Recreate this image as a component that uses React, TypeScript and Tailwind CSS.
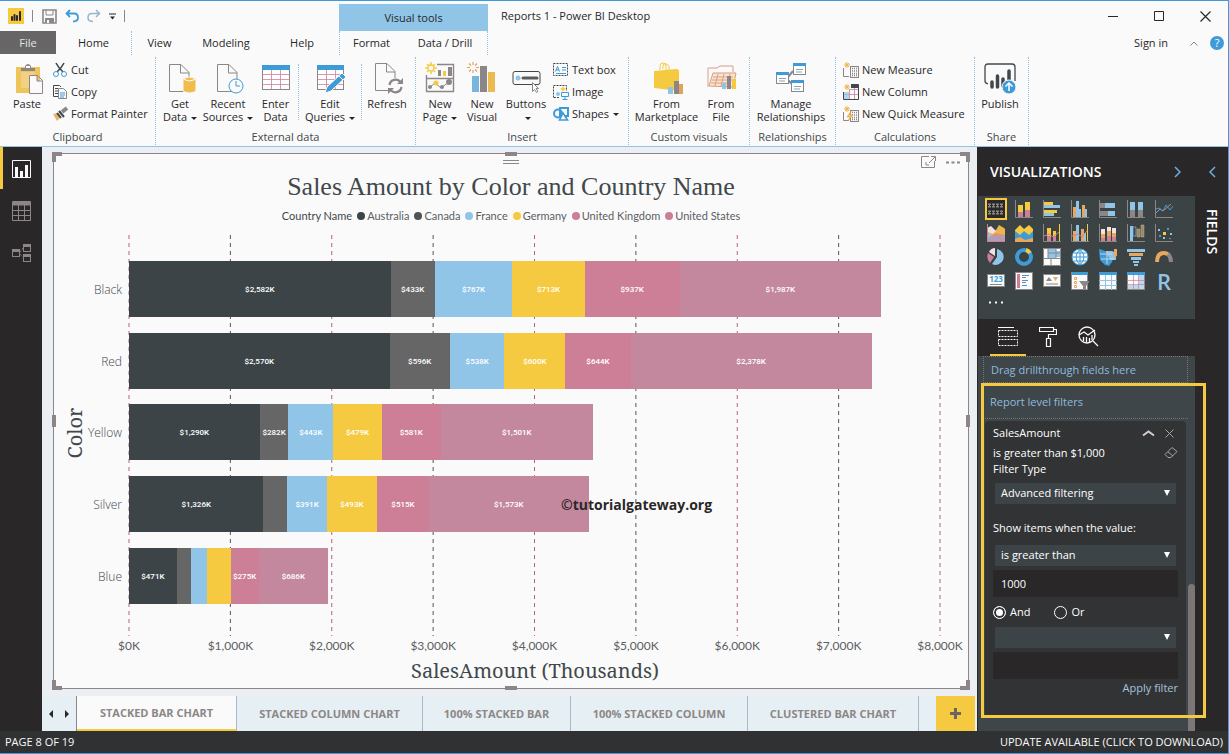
import React, { useState } from "react";

type Kids = { children?: React.ReactNode };

const GREY = "#8c8786";
const BLUE = "#3f9bd8";
const SKY = "#90c5e8";
const YEL = "#f5ca41";
const PINK = "#ce7f98";
const INK = "#41484b";
const DARK = "#292728";

function Ic({ w = 32, h = 32, children }: Kids & { w?: number; h?: number }) {
  return (
    <svg width={w} height={h} viewBox={`0 0 ${w} ${h}`} fill="none" aria-hidden="true" className="block shrink-0">
      {children}
    </svg>
  );
}

/* ---------- ribbon pieces ---------- */

function Caret() {
  return <span className="ml-1 inline-block border-x-[3px] border-t-[3px] border-x-transparent border-t-[#292728] align-middle" />;
}

function BigButton({ icon, lines, width, caret }: { icon: React.ReactNode; lines: string[]; width: string; caret?: boolean }) {
  return (
    <button type="button" className={`flex flex-col items-center gap-[3px] text-[11px] leading-[13px] whitespace-nowrap ${width}`}>
      {icon}
      <span className="block text-center">
        {lines.map((line, i) => (
          <span key={i} className="block">
            {line}
            {caret && i === lines.length - 1 && <Caret />}
          </span>
        ))}
      </span>
    </button>
  );
}

function SmallButton({ icon, label, caret }: { icon: React.ReactNode; label: string; caret?: boolean }) {
  return (
    <button type="button" className="flex h-[22px] items-center gap-[3px] text-[11px] whitespace-nowrap">
      {icon}
      <span>
        {label}
        {caret && <Caret />}
      </span>
    </button>
  );
}

function Group({ label, width, children }: Kids & { label: string; width: string }) {
  return (
    <section className={`flex shrink-0 flex-col justify-between border-r border-dotted border-[#90c5e8] ${width}`}>
      <div className="flex">{children}</div>
      <h2 className="text-center text-[11px] leading-4 text-[#41484b]">{label}</h2>
    </section>
  );
}

function Divider() {
  return <span className="mx-[3px] mt-[2px] h-14 border-l border-dotted border-[#90c5e8]" />;
}

const page = (
  <path d="M5.500 2.500H17l8 8V29.500H5.500zM16.500 2.500V11H25" stroke={GREY} fill="#fafafa" />
);

const Paste = () => (
  <Ic>
    <rect x="5" y="5" width="24" height="26" fill="#efc45a" />
    <rect x="10" y="10" width="14" height="16" fill="#fafafa" opacity=".25" />
    <path d="M10 9V6h4V4q3-4 6 0v2h4v3z" fill={GREY} />
    <rect x="15" y="4" width="4" height="2" fill="#fafafa" />
    <path d="M18.500 13.500h8l5 5v13h-13zM26 13.500V19h5.500" stroke={GREY} fill="#fafafa" />
  </Ic>
);
const GetData = () => (
  <Ic>
    {page}
    <path d="M19 17q6-4 13 0v12q-6 4-13 0z" fill="#efbd4c" stroke="#fafafa" />
    <path d="M20 17.500q5.500 3 11 0" stroke="#fff" />
  </Ic>
);
const Recent = () => (
  <Ic>
    {page}
    <circle cx="24" cy="24" r="7" fill="#fafafa" stroke={BLUE} />
    <path d="M24 19v5h4" stroke={BLUE} />
  </Ic>
);
const EnterData = () => (
  <Ic>
    <rect x="2.500" y="3.500" width="27" height="24" stroke={GREY} fill="#fff" />
    <rect x="2" y="3" width="28" height="5" fill={BLUE} />
    <path d="M11.500 8v19M20.500 8v19M3 12.500h26M3 17.500h26M3 22.500h26" stroke={PINK} opacity=".8" />
  </Ic>
);
const EditQ = () => (
  <Ic>
    <rect x="3.500" y="3.500" width="26" height="24" stroke={GREY} fill="#fff" />
    <rect x="3" y="3" width="27" height="5" fill={BLUE} />
    <path d="M12.500 8v19M21.500 8v19M4 12.500h25M4 17.500h25M4 22.500h25" stroke={PINK} opacity=".8" />
    <path d="M11 31l2-6L28 11l4 4-15 14z" fill={BLUE} stroke="#fafafa" />
    <path d="M25 14l4 4" stroke="#fafafa" />
  </Ic>
);
const Refresh = () => (
  <Ic>
    <path d="M4.500 1.500H16l8 8V28.500H4.500zM15.500 1.500V10H24" stroke={GREY} fill="#fafafa" />
    <rect x="17" y="16" width="15" height="15" fill="#fafafa" />
    <path d="M18.500 23a6 6 0 0 1 11-2.500M30.500 25a6 6 0 0 1-11 2.500" stroke={GREY} strokeWidth="2.200" />
    <path d="M32 16v6h-6zM17 32v-6h6z" fill={GREY} />
  </Ic>
);
const Sun = ({ x, y, c = YEL }: { x: number; y: number; c?: string }) => (
  <g transform={`translate(${x} ${y})`}>
    <path d="M0-6V-3M0 3v3M-6 0h3M3 0h3M-4-4l2 2M4-4L2-2M-4 4l2-2M4 4L2 2" stroke={c} strokeWidth="1.500" />
    <circle r="3" fill="#fafafa" stroke={c} strokeWidth="1.300" />
  </g>
);
const NewPage = () => (
  <Ic>
    <path d="M13 2.500h16.500v27h-27V13M3 16.500h26" stroke={GREY} strokeWidth="1.400" />
    <path d="M14 8h3v6h-3zM24 5h4v9h-4z" fill={GREY} />
    <path d="M19 9h3v5h-3z" fill={YEL} />
    <path d="M5 26l6-5 6 5 8-6" stroke={GREY} />
    <circle cx="6" cy="25" r="2" fill={GREY} />
    <circle cx="12" cy="21" r="2.500" fill={YEL} />
    <circle cx="18" cy="25" r="2" fill={GREY} />
    <circle cx="25" cy="20" r="3" fill={GREY} />
    <Sun x={7} y={6} />
  </Ic>
);
const NewVisual = () => (
  <Ic>
    <rect x="6" y="14" width="7" height="16" fill="#7ab5de" />
    <rect x="14" y="4" width="7" height="26" fill={GREY} />
    <rect x="22" y="10" width="7" height="20" fill="#e9bb50" />
    <path d="M7 0v3M7 8v3M1 5.500h3M10 5.500h3M3 1.500l2 2M11 1.500l-2 2M3 9.500l2-2M11 9.500l-2-2" stroke="#e2a25c" strokeWidth="1.200" />
  </Ic>
);
const ButtonsIcon = () => (
  <Ic>
    <rect x="3" y="9.500" width="27" height="13" rx="2" stroke={INK} />
    <circle cx="8" cy="16" r="2.500" fill={SKY} />
    <path d="M13 16h14" stroke="#5b5c5e" strokeWidth="3" strokeLinecap="round" />
    <path d="M22.500 20.500v9l2-2 2 3 1.500-1-2-3h2.500z" fill="#fff" stroke={GREY} />
  </Ic>
);
const Market = () => (
  <Ic>
    <path d="M9 8V4q0-3 3-3t3 3v4M12 7V3q2-3 6 1v4" stroke={YEL} />
    <path d="M3 9l22-2q3 0 3 2v20L3 26z" fill={YEL} />
    <path d="M17 25h5v7h-5z" fill={SKY} />
    <path d="M23 19h5v13h-5z" fill={GREY} />
    <path d="M28 22h4v10h-4z" fill="#e4a258" />
  </Ic>
);
const FromFile = () => (
  <Ic>
    <path d="M3 25V6h9l3-2h13v6" stroke="#d99c90" />
    <path d="M4 24l4-13h23l-3 14z" fill="#f6e4d8" stroke="#de9c70" />
    <path d="M8 15h20M7 18h20M6 21h20M13 12l-3 12M19 12l-3 12M25 12l-3 12" stroke="#e0a078" />
    <path d="M17 21h4v6h-4z" fill={SKY} />
    <path d="M22 14h4v13h-4z" fill={GREY} />
    <path d="M27 17h4v10h-4z" fill={YEL} />
  </Ic>
);
const Manage = () => (
  <Ic>
    <path d="M13 15l5-6M13 18l4 4" stroke={GREY} strokeWidth="2" />
    {[[1, 10], [18, 1], [16, 18]].map(([x, y]) => (
      <g key={x} transform={`translate(${x} ${y})`}>
        <rect x=".5" y=".5" width="12" height="11" fill="#fff" stroke={GREY} />
        <rect width="13" height="3" fill={BLUE} />
        <path d="M3 6.500h7M3 9h6" stroke="#87a4bf" />
      </g>
    ))}
  </Ic>
);
const Publish = () => (
  <Ic>
    <path d="M4 22q-3-1-3-3V5q0-3 3-3h24q3 0 3 3v14" stroke={INK} strokeWidth="1.300" />
    <path d="M8 20v5M13.500 14v11M19 17v7M25 9v9" stroke={INK} strokeWidth="3.500" strokeLinecap="round" />
    <circle cx="25" cy="25" r="7" fill={BLUE} stroke="#fafafa" />
    <path d="M25 29v-8M21.500 24.500L25 21l3.500 3.500" stroke="#fff" strokeWidth="1.500" />
  </Ic>
);
const Cut = () => (
  <Ic w={16} h={16}>
    <path d="M4 1q2 4 7 9M12 1q-2 4-7 9" stroke={INK} strokeWidth="1.600" />
    <circle cx="4" cy="12" r="2.500" stroke={BLUE} />
    <circle cx="12" cy="12" r="2.500" stroke={BLUE} />
  </Ic>
);
const Copy = () => (
  <Ic w={16} h={16}>
    <path d="M6 12.500H1.500v-11h6L9 3M3 4.500h3M3 7h3M3 9.500h3" stroke={INK} />
    <path d="M6.500 4.500h5l3 3v7h-8z" stroke={GREY} fill="#fafafa" />
    <path d="M8 9h5M8 11h5M8 13h4" stroke={BLUE} />
  </Ic>
);
const Brush = () => (
  <Ic w={16} h={16}>
    <path d="M1 8l6-1 2 4-4 4z" fill="#e8b36a" />
    <path d="M7 5l5 6M5 7l4 5" stroke={INK} strokeWidth="2" />
    <path d="M10 6l5-4" stroke={GREY} strokeWidth="4" />
  </Ic>
);
const TextBox = () => (
  <Ic w={16} h={16}>
    <rect x=".5" y="1.500" width="14" height="12" stroke={INK} strokeDasharray="2 1" />
    <path d="M2.500 9.500l2-5 2 5M3 8h3" stroke={BLUE} />
    <path d="M9 5.500h4M9 8h4M3 11.500h10" stroke={BLUE} />
  </Ic>
);
const ImageIcon = () => (
  <Ic w={16} h={16}>
    <path d="M.5 13.500V1.500h13V7M1 13.500h5" stroke={INK} strokeDasharray="2 1" />
    <path d="M10 2l1 2 2 1-2 1-1 2-1-2-2-1 2-1z" fill={YEL} />
    <circle cx="5" cy="10" r="2" fill={SKY} />
    <path d="M8.500 8.500h7v4h-7zM12 13v2M9.500 15.500h5" stroke={BLUE} />
  </Ic>
);
const Shapes = () => (
  <Ic w={16} h={16}>
    <circle cx="5" cy="7.500" r="4" stroke={BLUE} strokeWidth="2" />
    <path d="M7 2h8v8H7z" stroke={BLUE} strokeWidth="2" />
    <path d="M6.500 14l3.500-7 4.500 7z" fill="#fafafa" stroke={BLUE} strokeWidth="1.600" />
  </Ic>
);
function Calc({ kind }: { kind: "measure" | "column" | "quick" }) {
  return (
    <Ic w={16} h={16}>
      {kind === "column" ? (
        <>
          <path d="M8 .5h7.500v15H.5V8M15.500 1v14" stroke={INK} />
          <path d="M6.500 6v9M1 10.500h14M11.500 3v12M6 5.500h9" stroke={PINK} opacity=".8" />
          <path d="M8 1h7v3H8z" fill={INK} />
          <path d="M1 8h5v7H1z" fill={SKY} opacity=".7" />
        </>
      ) : (
        <>
          <path d="M.5 6v8.500H6" stroke={GREY} />
          <rect x="7.500" y="4.500" width="8" height="11" stroke={GREY} fill="#fafafa" />
          <path d="M9 6.500h5M9 9h5M9 11.500h5M9 13.500h5" stroke={GREY} strokeDasharray="1 1" strokeWidth="1.500" />
        </>
      )}
      {kind === "quick" && <path d="M8 5l-4 6h3l-2 4 5-6H7z" fill={YEL} stroke="#e08c50" strokeWidth=".5" />}
      <path d="M4 0v6M1 3h6M2 1l4 4M6 1L2 5" stroke="#efb544" />
    </Ic>
  );
}

/* ---------- header ---------- */

const tabs: [string, string][] = [
  ["Home", "w-[76px] border-r border-dotted border-[#90c5e8]"],
  ["View", "w-[55px]"],
  ["Modeling", "w-[78px]"],
  ["Help", "w-[74px]"],
  ["Format", "w-16 border-l border-dotted border-[#90c5e8]"],
  ["Data / Drill", "w-[85px] border-r border-dotted border-[#90c5e8]"],
];

function Header() {
  return (
    <header className="bg-[#fafafa] text-[#292728]">
      <div className="flex h-[30px] items-stretch">
        <div className="flex w-[339px] items-center gap-2 pl-2">
          <Ic w={16} h={16}>
            <path d="M0 0h16v16H0z" fill={YEL} />
            <path d="M4 9v3M6.500 7v5M9 8v4M12 4v8" stroke={DARK} strokeWidth="2" strokeLinecap="round" />
          </Ic>
          <Ic w={2} h={12}><path d="M.5 0v12" stroke={GREY} /></Ic>
          <button type="button" aria-label="Save">
            <Ic w={15} h={15}>
              <path d="M1 1h13v13H1z" stroke={GREY} strokeWidth="1.600" />
              <path d="M4 1v5h7V1" stroke={GREY} />
              <path d="M3 9h9v5H3z" fill={GREY} />
              <path d="M5 11h2v3H5z" fill="#fafafa" />
            </Ic>
          </button>
          <button type="button" aria-label="Undo">
            <Ic w={14} h={14}>
              <path d="M5 1L1.500 4.500 5 8M2 4.500h7q4 0 4 4t-5 4" stroke={BLUE} strokeWidth="1.800" />
            </Ic>
          </button>
          <button type="button" aria-label="Redo">
            <Ic w={14} h={14}>
              <path d="M9 1l3.500 3.500L9 8M12 4.500H5q-4 0-4 4t5 4" stroke="#97b6cf" strokeWidth="1.500" />
            </Ic>
          </button>
          <button type="button" aria-label="Customize quick access">
            <Ic w={7} h={7}><path d="M0 1h7" stroke={DARK} /><path d="M1 3.500h5L3.500 6.500z" fill={DARK} /></Ic>
          </button>
          <Ic w={2} h={12}><path d="M.5 0v12" stroke={GREY} /></Ic>
        </div>
        <div className="mt-[3px] w-[149px] bg-[#90c5e8] text-center text-[11px] leading-7">Visual tools</div>
        <h1 className="ml-[13px] text-[11px] leading-[30px]">Reports 1 - Power BI Desktop</h1>
        <div className="ml-auto flex items-center gap-[36px] pr-[17px]">
          <button type="button" aria-label="Minimize"><Ic w={10} h={11}><path d="M0 5.500h10" stroke={DARK} /></Ic></button>
          <button type="button" aria-label="Maximize"><Ic w={10} h={11}><path d="M.5.500h9v9h-9z" stroke={DARK} /></Ic></button>
          <button type="button" aria-label="Close"><Ic w={11} h={11}><path d="M.5.500l10 10M10.500.500l-10 10" stroke={DARK} strokeWidth="1.200" /></Ic></button>
        </div>
      </div>
      <nav className="flex h-6 items-start text-[11px] leading-6">
        <button type="button" className="h-[23px] w-14 bg-[#676566] leading-[23px] text-[#e4e4e4]">File</button>
        {tabs.map(([name, cls]) => (
          <button key={name} type="button" className={cls}>{name}</button>
        ))}
        <div className="ml-auto flex h-6 items-center gap-[22px] pr-1">
          <button type="button">Sign in</button>
          <div className="flex items-center gap-3">
            <button type="button" aria-label="Collapse ribbon"><Ic w={8} h={5}><path d="M.5 4.500L4 1l3.500 3.500" stroke={GREY} /></Ic></button>
            <button type="button" aria-label="Help" className="h-[14px] w-[14px] rounded-full bg-[#3f9bd8] text-center text-[11px] leading-[14px] text-white">?</button>
          </div>
        </div>
      </nav>
      <div className="flex h-[92px] border-b border-[#90c5e8] pt-[2px] pb-px">
        <Group label="Clipboard" width="w-[156px]">
          <div className="ml-1 pt-[5px]"><BigButton icon={<Paste />} lines={["Paste"]} width="w-[46px]" /></div>
          <div className="ml-[2px] pt-[2px]">
            <SmallButton icon={<Cut />} label="Cut" />
            <SmallButton icon={<Copy />} label="Copy" />
            <SmallButton icon={<Brush />} label="Format Painter" />
          </div>
        </Group>
        <Group label="External data" width="w-[260px]">
          <div className="ml-1 flex pt-[5px]">
            <BigButton icon={<GetData />} lines={["Get", "Data"]} width="w-10" caret />
            <BigButton icon={<Recent />} lines={["Recent", "Sources"]} width="w-14" caret />
            <BigButton icon={<EnterData />} lines={["Enter", "Data"]} width="w-[39px]" />
            <Divider />
            <BigButton icon={<EditQ />} lines={["Edit", "Queries"]} width="w-14" caret />
            <Divider />
            <BigButton icon={<Refresh />} lines={["Refresh"]} width="w-11" />
          </div>
        </Group>
        <Group label="Insert" width="w-[213px]">
          <div className="ml-[3px] flex pt-[5px]">
            <BigButton icon={<NewPage />} lines={["New", "Page"]} width="w-[42px]" caret />
            <BigButton icon={<NewVisual />} lines={["New", "Visual"]} width="w-[42px]" />
            <BigButton icon={<ButtonsIcon />} lines={["Buttons", ""]} width="w-[46px]" caret />
          </div>
          <div className="ml-1 pt-[2px]">
            <SmallButton icon={<TextBox />} label="Text box" />
            <SmallButton icon={<ImageIcon />} label="Image" />
            <SmallButton icon={<Shapes />} label="Shapes" caret />
          </div>
        </Group>
        <Group label="Custom visuals" width="w-[121px]">
          <div className="ml-1 flex pt-[5px]">
            <BigButton icon={<Market />} lines={["From", "Marketplace"]} width="w-[67px]" />
            <BigButton icon={<FromFile />} lines={["From", "File"]} width="w-[42px]" />
          </div>
        </Group>
        <Group label="Relationships" width="w-[86px]">
          <div className="pt-[5px]"><BigButton icon={<Manage />} lines={["Manage", "Relationships"]} width="w-[82px]" /></div>
        </Group>
        <Group label="Calculations" width="w-[139px]">
          <div className="ml-[7px] pt-[2px]">
            <SmallButton icon={<Calc kind="measure" />} label="New Measure" />
            <SmallButton icon={<Calc kind="column" />} label="New Column" />
            <SmallButton icon={<Calc kind="quick" />} label="New Quick Measure" />
          </div>
        </Group>
        <Group label="Share" width="w-[54px]">
          <div className="pt-[5px]"><BigButton icon={<Publish />} lines={["Publish"]} width="w-[50px]" /></div>
        </Group>
      </div>
    </header>
  );
}

/* ---------- chart ---------- */

const series = [
  { name: "Australia", color: "#3d4447", dot: "#3d4447" },
  { name: "Canada", color: "#666667", dot: "#4f5355" },
  { name: "France", color: SKY, dot: SKY },
  { name: "Germany", color: YEL, dot: YEL },
  { name: "United Kingdom", color: PINK, dot: PINK },
  { name: "United States", color: "#c4889e", dot: "#ca7f98" },
];

const rows: { name: string; values: number[]; hidden?: number[] }[] = [
  { name: "Black", values: [2582, 433, 767, 713, 937, 1987] },
  { name: "Red", values: [2570, 596, 538, 600, 644, 2378] },
  { name: "Yellow", values: [1290, 282, 443, 479, 581, 1501] },
  { name: "Silver", values: [1326, 235, 391, 493, 515, 1573], hidden: [1] },
  { name: "Blue", values: [471, 145, 152, 235, 275, 686], hidden: [1, 2, 3] },
];

const money = (v: number) => `$${v.toLocaleString("en-US")}K`;
const X0 = 129;
const UNIT = 811 / 8000;

function Plot() {
  const ticks = [0, 1, 2, 3, 4, 5, 6, 7, 8];
  return (
    <svg viewBox="54 230 914 458" className="block w-full" role="img" aria-label="Sales amount by color and country">
      {ticks.map((t) => (
        <g key={t}>
          <line x1={X0 + t * 1000 * UNIT} x2={X0 + t * 1000 * UNIT} y1="235" y2="636" stroke={t % 2 ? "#5f5157" : "#b9617f"} strokeDasharray="4 4" strokeWidth="1" />
          <text x={X0 + t * 1000 * UNIT} y="650" textAnchor="middle" fontSize="12" fill="#5a6063" className="font-['Lato']">
            {t === 0 ? "$0K" : money(t * 1000)}
          </text>
        </g>
      ))}
      {rows.map((row, r) => {
        const y = Math.round(261 + r * 71.7);
        let x = X0;
        return (
          <g key={row.name}>
            <text x="122" y={y + 33} textAnchor="end" fontSize="12" fill={INK} className="font-['Open_Sans'] font-light">{row.name}</text>
            {row.values.map((v, i) => {
              const left = x;
              const w = v * UNIT;
              x += w;
              return (
                <g key={i}>
                  <rect x={left} y={y} width={w} height="56" fill={series[i].color} shapeRendering="crispEdges" />
                  {!row.hidden?.includes(i) && (
                    <text x={left + w / 2} y={y + 31} textAnchor="middle" fontSize="8" fill="#fff" className="font-['Roboto'] font-medium">{money(v)}</text>
                  )}
                </g>
              );
            })}
          </g>
        );
      })}
      <text x="535" y="678" textAnchor="middle" fontSize="20" fill={INK} className="font-['Noto_Serif','Liberation_Serif',serif]">SalesAmount (Thousands)</text>
      <text transform="translate(82 433) rotate(-90)" textAnchor="middle" fontSize="20" fill={INK} className="font-['Noto_Serif','Liberation_Serif',serif]">Color</text>
      <text x="561" y="510" fontSize="14" fill={DARK} className="font-['Open_Sans'] font-bold">©tutorialgateway.org</text>
    </svg>
  );
}

function ChartVisual() {
  const corner = "absolute h-[10px] w-[10px] border-[#8c8786]";
  const mid = "absolute bg-[#8c8786]";
  return (
    <section className="relative mx-2 mt-[6px] mb-[7px] ml-[11px] border border-[#8c8786] bg-[#fafafa]">
      <span className={`${corner} -top-[2px] -left-[2px] border-t-4 border-l-4`} />
      <span className={`${corner} -top-[2px] -right-[2px] border-t-4 border-r-4`} />
      <span className={`${corner} -bottom-[2px] -left-[2px] border-b-4 border-l-4`} />
      <span className={`${corner} -right-[2px] -bottom-[2px] border-r-4 border-b-4`} />
      <span className={`${mid} -top-[2px] left-1/2 h-1 w-3 -translate-x-1/2`} />
      <span className={`${mid} -bottom-[2px] left-1/2 h-1 w-3 -translate-x-1/2`} />
      <span className={`${mid} top-1/2 -left-[2px] h-3 w-1 -translate-y-1/2`} />
      <span className={`${mid} top-1/2 -right-[2px] h-3 w-1 -translate-y-1/2`} />
      <span className="absolute top-[6px] left-1/2 h-1 w-4 -translate-x-1/2 border-y border-[#8c8786]" />
      <div className="absolute top-[2px] right-2 flex items-center gap-[10px]">
        <button type="button" aria-label="Focus mode">
          <Ic w={15} h={12}>
            <path d="M8 .5H.5v11h13V5M8 7l6-6M10 .5h4.500V5M5 6v3h3" stroke={GREY} />
          </Ic>
        </button>
        <button type="button" aria-label="More options">
          <Ic w={14} h={12}><path d="M0 6.500h3M5.500 6.500h3M11 6.500h3" stroke={GREY} strokeWidth="2" /></Ic>
        </button>
      </div>
      <h2 className="mt-[17px] text-center font-['Liberation_Serif',serif] text-[26px] leading-8 text-[#41484b]">Sales Amount by Color and Country Name</h2>
      <ul className="mt-[5px] mb-[6px] flex items-center justify-center gap-[5px] font-['Lato'] text-[11px] leading-4 text-[#5a6063]">
        <li className="text-[#41484b]">Country Name</li>
        {series.map((s) => (
          <li key={s.name} className="flex items-center gap-[2px]">
            <svg width="8" height="8" aria-hidden="true"><circle cx="4" cy="4" r="4" fill={s.dot} /></svg>
            {s.name}
          </li>
        ))}
      </ul>
      <Plot />
    </section>
  );
}

const pages: [string, string][] = [
  ["STACKED BAR CHART", "w-[160px]"],
  ["STACKED COLUMN CHART", "w-[186px]"],
  ["100% STACKED BAR", "w-[148px]"],
  ["100% STACKED COLUMN", "w-[177px]"],
  ["CLUSTERED BAR CHART", "w-[171px]"],
];

function PageTabs() {
  const [current, setCurrent] = useState(0);
  return (
    <nav className="mt-auto flex h-[35px] bg-[#e6eff4] text-[11px] font-bold text-[#8c8786]">
      <div className="flex w-[35px] items-center justify-center gap-3 border-r border-[#8c8786]">
        <button type="button" aria-label="Previous pages"><Ic w={4} h={8}><path d="M4 0v8L0 4z" fill={DARK} /></Ic></button>
        <button type="button" aria-label="Next pages"><Ic w={4} h={8}><path d="M0 0v8l4-4z" fill={DARK} /></Ic></button>
      </div>
      {pages.map(([name, width], i) => (
        <button
          key={name}
          type="button"
          onClick={() => setCurrent(i)}
          className={`border-r border-[#a9b9cb] pt-[2px] whitespace-nowrap ${width} ${i === current ? "border-b-2 border-b-[#f5ca41] bg-[#fafafa]" : ""}`}
        >
          {name}
        </button>
      ))}
      <button type="button" aria-label="New page" className="mr-[2px] ml-auto flex w-[39px] items-center justify-center bg-[#f5ca41]">
        <Ic w={11} h={11}><path d="M5.500 0v11M0 5.500h11" stroke="#6b6760" strokeWidth="3" /></Ic>
      </button>
    </nav>
  );
}

/* ---------- side panels ---------- */

function LeftNav() {
  return (
    <nav className="flex w-[42px] shrink-0 flex-col bg-[#292728]">
      <button type="button" aria-label="Report view" className="flex h-[42px] items-center border-l-[3px] border-[#f5ca41] pt-[2px] pl-[9px]">
        <Ic w={19} h={18}>
          <path d="M.5.500h18v17H.5z" stroke="#fafafa" />
          <path d="M3 7h3v11H3zM8 11h3v7H8zM13 5h3v13h-3z" fill="#fafafa" />
        </Ic>
      </button>
      <button type="button" aria-label="Data view" className="flex h-[42px] items-center border-l-[3px] border-transparent pt-[2px] pl-[9px]">
        <Ic w={19} h={20}>
          <path d="M.5.500h18v19H.5zM6.500 4v16M12.500 4v16M0 9.500h19M0 14.500h19" stroke={GREY} />
          <path d="M1 1h17v3.500H1z" fill={GREY} />
        </Ic>
      </button>
      <button type="button" aria-label="Model view" className="flex h-[42px] items-center border-l-[3px] border-transparent pt-[2px] pl-[9px]">
        <Ic w={19} h={18}>
          <path d="M8 8l3-4M8 10l3 3" stroke={GREY} strokeDasharray="1 1" />
          {[[0, 5], [11, 0], [11, 10]].map(([x, y]) => (
            <g key={`${x}-${y}`} transform={`translate(${x} ${y})`}>
              <rect x=".5" y=".5" width="7" height="7" stroke={GREY} />
              <rect width="8" height="3" fill={GREY} />
            </g>
          ))}
        </Ic>
      </button>
    </nav>
  );
}

const axis = <path d="M.5 0v17.500H18" stroke={GREY} />;
const OR = "#e7a75c";

const visuals: [string, React.ReactNode][] = [
  ["Custom visual", <><rect width="18" height="18" fill={DARK} /><path d="M1 5.500h16M1 12.500h16" stroke={GREY} strokeDasharray="3 1" strokeWidth="4" /><path d="M1 5.500h16M1 12.500h16" stroke={DARK} strokeDasharray="1 1" /></>],
  ["Stacked column", <>{axis}<path d="M3 5h5v7H3zM10 2h5v9h-5z" fill={YEL} /><path d="M3 12h5v5H3zM10 10h5v7h-5z" fill={PINK} /></>],
  ["Clustered bar", <>{axis}<path d="M1 2h9v3H1zM1 10h13v3H1z" fill={YEL} /><path d="M1 5h16v3H1zM1 13h10v3H1z" fill={SKY} /></>],
  ["Clustered column", <>{axis}<path d="M2 7h3v10H2zM11 5h3v12h-3z" fill={OR} /><path d="M5 1h3v16H5zM8 9h2v8H8zM14 9h2v8h-2z" fill={SKY} /></>],
  ["100% bar", <>{axis}<path d="M1 3h5v5H1zM1 11h8v5H1z" fill={GREY} /><path d="M6 3h10v5H6zM9 11h7v5H9z" fill={SKY} /></>],
  ["100% column", <>{axis}<path d="M3 2h5v8H3zM11 2h5v8h-5z" fill={SKY} /><path d="M3 10h5v7H3zM11 10h5v7h-5z" fill={GREY} /></>],
  ["Line", <>{axis}<path d="M1 13l4-4 3 2 8-7" stroke={PINK} /><path d="M1 9l3-1 4 3 3-6 4 5 3-4" stroke={BLUE} /></>],
  ["Area", <><path d="M0 9l9-3 3-5 5 3 1 1v13H0z" fill="#ecb44c" /><path d="M0 9l6 3 6 0 6-1v7H0z" fill={SKY} /><path d="M0 4l4-2 5 5-3 3-6-2z" fill="#f3dfe2" /><path d="M8 9l10 2v7H0v-3z" fill={PINK} opacity=".6" /><path d="M.5 0v17.500H18" stroke={PINK} /></>],
  ["Stacked area", <><path d="M0 6l5-5 4 4 5-4 4 4v13H0z" fill={YEL} /><path d="M0 7l5 4 4-4 5 4 4-4v11H0z" fill={BLUE} /><path d="M0 15l5-2 5 3 8-2v4H0z" fill={OR} /></>],
  ["Line and stacked column", <>{axis}<path d="M4 4h4v9H4zM10 7h3v6h-3z" fill={YEL} /><path d="M4 12h4v5H4zM10 12h3v5h-3z" fill={PINK} /><path d="M16.500 0v17" stroke={YEL} /><path d="M1 12l5-2 4 3 6-5" stroke={PINK} /></>],
  ["Line and clustered column", <>{axis}<path d="M2 7h3v10H2zM10 5h3v12h-3z" fill={OR} /><path d="M5 1h3v16H5zM13 9h2v8h-2z" fill={SKY} /><path d="M16.500 0v17" stroke={YEL} /><path d="M1 12l6-2 4 3 5-6" stroke={PINK} /></>],
  ["Ribbon", <>{axis}<path d="M2 5h4v5H2zM8 3h4v4H8zM13 4h4v5h-4z" fill="#f3e3dc" /><path d="M2 10h4v4H2zM8 7h4v5H8zM13 9h4v4h-4z" fill={OR} /><path d="M2 14h4v3H2zM8 12h4v5H8zM13 13h4v4h-4z" fill={PINK} /></>],
  ["Waterfall", <>{axis}<path d="M3 2h3v15H3z" fill={SKY} /><path d="M6 3h3v9H6z" fill={INK} stroke={SKY} strokeWidth=".6" /><path d="M10 5h3v8h-3zM14 1h3v12h-3z" fill={GREY} stroke={YEL} strokeWidth=".4" /></>],
  ["Scatter", <>{axis}<path d="M3 5h2v2H3zM8 13h2v2H8zM15 9h2v2h-2z" fill={SKY} /><path d="M8 8h3v3H8z" fill={YEL} /><path d="M12 4h2v2h-2zM4 11h2v2H4z" fill={BLUE} /><path d="M14 14h2v1h-2z" fill={GREY} /></>],
  ["Pie", <><path d="M10 1a8 8 0 1 1-5 15L10 9z" fill={SKY} /><path d="M8 0v8L2 4q2-4 6-4z" fill="#f3dfe2" /><path d="M1 5l6 4-4 6q-4-4-2-10z" fill={PINK} /></>],
  ["Donut", <><circle cx="9" cy="9" r="7" stroke={BLUE} strokeWidth="4" /><path d="M11 2a7 7 0 0 1 4 3" stroke={YEL} strokeWidth="4" /></>],
  ["Treemap", <><path d="M0 0h18v18H0z" fill="#fafafa" /><path d="M5 1h8v9H5zM13 3h4v6h-4z" fill={SKY} /><path d="M.5.500h17v17H.5zM5 0v10M13 0v10M0 10.500h18M8 11v7M5 5h12" stroke={GREY} /></>],
  ["Map", <><circle cx="9" cy="9" r="8" fill="#fafafa" stroke={BLUE} /><path d="M1 9h16M3 5h12M3 13h12M9 1v16M9 1q-8 8 0 16M9 1q8 8 0 16" stroke={BLUE} /></>],
  ["Filled map", <><path d="M0 1l6 2h7l1 7-1 4-3 4-4-1-5-5z" fill={BLUE} /><path d="M7 3h6l4 2v7h-6z" fill={SKY} /><path d="M15 1h3v7l-3 1z" fill={OR} /><path d="M1 6h12M2 11h13M8 3v13" stroke="#c9d2dc" /></>],
  ["Funnel", <><path d="M0 1h18v3H0zM6 13h6v2H6z" fill={SKY} /><path d="M2 5h14v3H2z" fill={OR} /><path d="M4 9h10v3H4zM7 16h4v2H7z" fill={SKY} /></>],
  ["Gauge", <><path d="M2 14q0-9 7-9 3 0 4 2" stroke={OR} strokeWidth="4" /><path d="M13 6q3 3 3 8" stroke={GREY} strokeWidth="4" /></>],
  ["Card", <><rect x=".5" y="2.500" width="17" height="12" fill="#fafafa" stroke={GREY} /><text x="9" y="10" textAnchor="middle" fontSize="8" fill={BLUE} className="font-['Open_Sans'] font-bold">123</text><path d="M3 12.500h12" stroke={GREY} /></>],
  ["Multi-row card", <><rect x=".5" y=".5" width="17" height="17" fill="#fafafa" stroke={GREY} /><path d="M2 2h3v14H2z" fill={PINK} /><path d="M7 3.500h7M7 8.500h6M7 13.500h5" stroke={BLUE} /><path d="M7 5.500h4M7 10.500h4" stroke={GREY} /></>],
  ["KPI", <><rect x=".5" y="2.500" width="17" height="12" fill="#fafafa" stroke={GREY} /><path d="M3 9l3-4 3 4z" fill={GREY} /><path d="M10 5h5l-2.500 4z" fill={OR} /><path d="M3 12h12" stroke={GREY} /></>],
  ["Slicer", <><rect x=".5" y=".5" width="16" height="17" fill="#fafafa" stroke={GREY} /><path d="M1 0h16v3H1z" fill={BLUE} /><path d="M3.500 5.500h2v2h-2zM3.500 9.500h2v2h-2zM3.500 13.500h2v2h-2z" stroke={OR} /><path d="M8 9h11l-4 5v4l-3-1v-3z" fill={GREY} /></>],
  ["Table", <><rect x=".5" y=".5" width="17" height="17" fill="#fafafa" stroke={GREY} /><path d="M6.500 3v15M12.500 3v15M0 8.500h18M0 13.500h18" stroke={SKY} /><path d="M0 0h18v3H0z" fill={BLUE} /></>],
  ["Matrix", <><rect x=".5" y=".5" width="17" height="17" fill="#fafafa" stroke={GREY} /><path d="M12 3h5v14h-5zM1 13h16v4H1z" fill={SKY} opacity=".6" /><path d="M6.500 3v15M11.500 3v15M0 8.500h18M0 12.500h18" stroke={PINK} opacity=".7" /><path d="M0 0h18v3H0z" fill={BLUE} /></>],
];

function Visualizations() {
  return (
    <div className="mr-[33px] ml-[1px] bg-[#3c4345] pt-1 pb-[14px] pl-[9px]">
      <div className="grid grid-cols-[repeat(7,18px)] gap-x-[10px] gap-y-[6px]">
        {visuals.map(([name, art], i) => (
          <button key={name} type="button" aria-label={name} className={i === 0 ? "outline-2 outline-[#f5ca41]" : ""}>
            <Ic w={18} h={18}>{art}</Ic>
          </button>
        ))}
        <button type="button" aria-label="R script visual" className="text-center font-['Open_Sans'] text-[22px] leading-[18px] font-semibold text-[#90c5e8]">R</button>
      </div>
      <button type="button" aria-label="More visuals" className="mt-2 ml-[2px] block">
        <Ic w={14} h={7}><path d="M0 4.500h2M6 4.500h2M12 4.500h2" stroke="#fafafa" strokeWidth="2" /></Ic>
      </button>
    </div>
  );
}

function Select({ id, label, value, options }: { id: string; label: string; value: string; options: string[] }) {
  return (
    <div className="relative mx-[2px]">
      <select id={id} aria-label={label} defaultValue={value} className="block h-[21px] w-full appearance-none bg-[#3d4447] px-[6px] text-white">
        {options.map((o) => <option key={o}>{o}</option>)}
      </select>
      <span className="pointer-events-none absolute top-[7px] right-[6px] border-x-[3px] border-t-[6px] border-x-transparent border-t-white" />
    </div>
  );
}

function Filters() {
  return (
    <div className="relative mr-[33px] ml-[1px] flex-1 bg-[#3f4649] pr-[7px] pl-[5px] text-[11px]">
      <p className="h-[27px] border border-dotted border-[#777] pl-[7px] leading-[25px] text-[#90bade]">Drag drillthrough fields here</p>
      <h3 className="mt-[3px] border-b border-dotted border-[#777] pl-[7px] leading-8 text-[#90bade]">Report level filters</h3>
      <form className="mt-[2px] mr-[2px] ml-[2px] h-[296px] rounded bg-[#323334] px-2 text-white" onSubmit={(e) => e.preventDefault()}>
        <div className="flex items-center justify-between pt-[2px] leading-5">
          <span>SalesAmount</span>
          <span className="flex items-center gap-[10px] pr-[4px]">
            <button type="button" aria-label="Collapse filter"><Ic w={13} h={8}><path d="M1 6.500l5.500-4 5.500 4" stroke="#d9c9dc" strokeWidth="2" /></Ic></button>
            <button type="button" aria-label="Remove filter"><Ic w={9} h={9}><path d="M.5.500l8 8M8.500.500l-8 8" stroke="#a8a5a5" /></Ic></button>
          </span>
        </div>
        <div className="flex items-center justify-between leading-5">
          <span>is greater than $1,000</span>
          <button type="button" aria-label="Clear filter">
            <Ic w={14} h={12}><path d="M1 7.500l7-7 5 4-6 6H4zM4 5l5 4" stroke="#a8a5a5" /></Ic>
          </button>
        </div>
        <label htmlFor="type" className="-mt-[2px] mb-[6px] block leading-4">Filter Type</label>
        <Select id="type" label="Filter Type" value="Advanced filtering" options={["Advanced filtering", "Basic filtering"]} />
        <label htmlFor="operator" className="mt-4 mb-[9px] block leading-4">Show items when the value:</label>
        <Select id="operator" label="Show items when the value" value="is greater than" options={["is greater than", "is less than"]} />
        <input aria-label="Value" defaultValue="1000" className="mt-1 block h-[27px] w-full bg-[#292728] px-2" />
        <div className="flex h-[30px] items-center gap-6">
          {["And", "Or"].map((o, i) => (
            <label key={o} className="flex items-center gap-1">
              <input type="radio" name="join" defaultChecked={i === 0} className="h-[13px] w-[13px] appearance-none rounded-full border border-white checked:bg-white checked:shadow-[inset_0_0_0_2px_#323334]" />
              {o}
            </label>
          ))}
        </div>
        <Select id="second" label="Second condition" value="" options={["", "is greater than", "is less than"]} />
        <input aria-label="Second value" className="mt-1 block h-[27px] w-full bg-[#292728] px-2" />
        <button type="button" className="ml-auto block leading-[18px] text-[#a9c3dc]">Apply filter</button>
      </form>
      <span className="absolute right-0 bottom-0 h-[147px] w-[7px] rounded-t bg-[#7b7777]" />
      <span className="pointer-events-none absolute top-[27px] left-[3px] h-[335px] w-[225px] border-[3px] border-[#f5ca41]" />
    </div>
  );
}

function RightPanel() {
  return (
    <aside className="relative flex w-[251px] shrink-0 flex-col bg-[#292728] text-white">
      <div className="flex h-[49px] items-center pl-[13px]">
        <h2 className="text-[14px] font-semibold">VISUALIZATIONS</h2>
        <div className="ml-auto flex gap-[28px] pr-3">
          <button type="button" aria-label="Collapse visualizations"><Ic w={7} h={12}><path d="M1 1l5 5-5 5" stroke="#6eb2e2" strokeWidth="1.500" /></Ic></button>
          <button type="button" aria-label="Expand fields"><Ic w={7} h={12}><path d="M6 1L1 6l5 5" stroke="#6eb2e2" strokeWidth="1.500" /></Ic></button>
        </div>
      </div>
      <h2 className="absolute top-[62px] right-[6px] text-[14px] leading-5 font-semibold [writing-mode:vertical-rl]">FIELDS</h2>
      <Visualizations />
      <div className="flex h-[37px] items-stretch gap-1 pl-[13px]">
        <button type="button" aria-label="Fields" className="flex w-9 items-center justify-center border-b-2 border-[#f5ca41]">
          <Ic w={20} h={20}><path d="M0 .5h16" stroke="#fafafa" /><path d="M.5 3.500h19v6H.500zM.5 12.500h19v6H.500z" stroke="#fafafa" strokeDasharray="2 1" /></Ic>
        </button>
        <button type="button" aria-label="Format" className="flex w-9 items-center justify-center border-b-2 border-transparent">
          <Ic w={18} h={20}><path d="M.5.500h14v4H.500zM14.500 2.500h3v5h-8V11M7.500 11.500h4v8h-4z" stroke="#fafafa" strokeWidth="1.200" /></Ic>
        </button>
        <button type="button" aria-label="Analytics" className="flex w-9 items-center justify-center border-b-2 border-transparent">
          <Ic w={21} h={21}><circle cx="9" cy="9" r="8" stroke="#fafafa" strokeWidth="1.300" /><path d="M1 9l5-3 4 3 7-5M5.500 15v-4M8.500 16v-5M11.500 16v-4M14 14V9M15 15l5 5" stroke="#fafafa" strokeWidth="1.300" /></Ic>
        </button>
      </div>
      <Filters />
    </aside>
  );
}

export default function App() {
  return (
    <div className="flex min-h-screen w-full flex-col border-t border-r border-b border-[#3f9bd8] bg-[#292728] font-['Open_Sans','Noto_Sans',sans-serif]">
      <Header />
      <main className="flex flex-1">
        <LeftNav />
        <div className="flex min-w-0 flex-1 flex-col bg-[#ebeef3]">
          <ChartVisual />
          <PageTabs />
        </div>
        <RightPanel />
      </main>
      <footer className="flex h-[22px] items-center justify-between bg-[#303132] pr-[5px] pl-[5px] text-[11px] text-[#fafafa]">
        <span>PAGE 8 OF 19</span>
        <button type="button">UPDATE AVAILABLE (CLICK TO DOWNLOAD)</button>
      </footer>
    </div>
  );
}
